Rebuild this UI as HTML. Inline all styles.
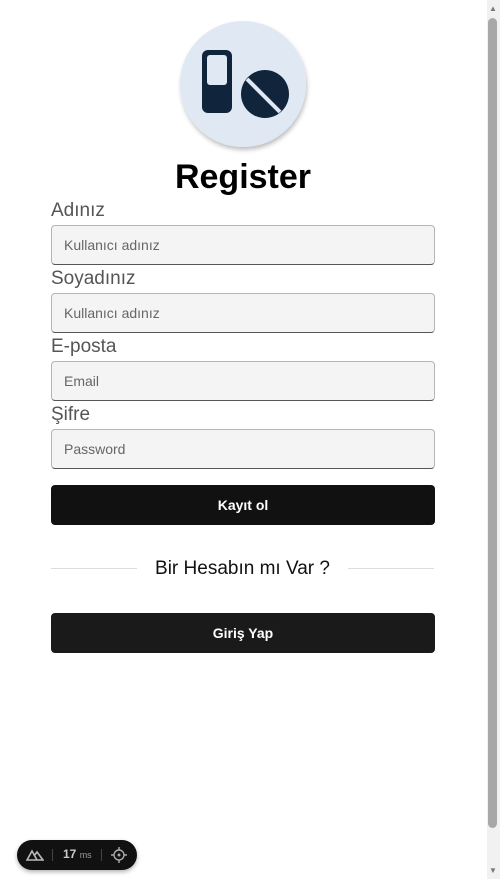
<!DOCTYPE html>
<html><head><style>
body{margin:0;width:500px;height:879px;background:#fff;font-family:"Liberation Sans",Arial,sans-serif;position:relative;overflow:hidden}
.lbl{position:absolute;left:51px;font-size:19px;color:#555;}
.inp{position:absolute;left:51px;height:38px;border:1px solid #b5b5b5;border-bottom:1px solid #555;border-radius:4px;background:#f4f4f4;font-size:14px;color:#666;line-height:38px;box-sizing:content-box;padding-left:12px;width:370px}
.btn{position:absolute;left:51px;width:384px;height:40px;border-radius:4px;color:#fff;font-weight:bold;font-size:14px;text-align:center;line-height:40px}
</style></head><body>
<svg style="position:absolute;left:170px;top:15px" width="150" height="140">
<defs><filter id="s"><feDropShadow dx="1" dy="3" stdDeviation="2" flood-opacity="0.25"/></filter></defs>
<circle cx="73" cy="69" r="63" fill="#dfe8f3" filter="url(#s)"/>
<rect x="32" y="35" width="30" height="63" rx="6" fill="#10243b"/>
<rect x="37" y="40" width="20" height="30" rx="3" fill="#dfe8f3"/>
<circle cx="95" cy="79" r="24" fill="#10243b"/>
<line x1="77" y1="64" x2="110" y2="97" stroke="#dfe8f3" stroke-width="4"/>
</svg>
<div style="position:absolute;left:0;width:486px;top:158px;text-align:center;font-size:34px;font-weight:bold;color:#000">Register</div>
<div class="lbl" style="top:200px">Adınız</div>
<div class="inp" style="top:225px">Kullanıcı adınız</div>
<div class="lbl" style="top:268px">Soyadınız</div>
<div class="inp" style="top:293px">Kullanıcı adınız</div>
<div class="lbl" style="top:336px">E-posta</div>
<div class="inp" style="top:361px">Email</div>
<div class="lbl" style="top:404px">Şifre</div>
<div class="inp" style="top:429px">Password</div>
<div class="btn" style="top:485px;background:#111">Kayıt ol</div>
<div style="position:absolute;left:51px;width:86px;top:568px;border-top:1px solid #ddd"></div>
<div style="position:absolute;left:348px;width:86px;top:568px;border-top:1px solid #ddd"></div>
<div style="position:absolute;left:137px;width:211px;top:558px;text-align:center;font-size:19px;color:#111">Bir Hesabın mı Var ?</div>
<div class="btn" style="top:613px;background:#1a1a1a">Giriş Yap</div>
<div style="position:absolute;left:487px;top:0;width:13px;height:879px;background:#f1f1f1"></div>
<div style="position:absolute;left:488px;top:18px;width:9px;height:810px;background:#a8a8a8;border-radius:5px"></div>
<div style="position:absolute;left:489px;top:4px;font-size:8px;color:#777">▲</div>
<div style="position:absolute;left:489px;top:866px;font-size:8px;color:#777">▼</div>
<div style="position:absolute;left:17px;top:840px;width:120px;height:30px;border-radius:15px;background:#111;box-shadow:0 2px 4px rgba(0,0,0,.3);color:#ccc;font-size:12px">
<svg style="position:absolute;left:9px;top:8px" width="18" height="14"><path d="M1 12 L6 3 L11 12 Z M8 8 L11 4 L17 12 H11" fill="none" stroke="#bbb" stroke-width="1.6"/></svg>
<div style="position:absolute;left:35px;top:9px;width:1px;height:12px;background:#444"></div>
<div style="position:absolute;left:46px;top:7px;font-weight:bold">17 <span style="font-size:9px;font-weight:normal;color:#999">ms</span></div>
<div style="position:absolute;left:84px;top:9px;width:1px;height:12px;background:#444"></div>
<svg style="position:absolute;left:94px;top:7px" width="16" height="16"><circle cx="8" cy="8" r="5" fill="none" stroke="#aaa" stroke-width="1.4"/><circle cx="8" cy="8" r="1.5" fill="#aaa"/><path d="M8 0v3M8 13v3M0 8h3M13 8h3" stroke="#aaa" stroke-width="1.4"/></svg>
</div>
</body></html>
